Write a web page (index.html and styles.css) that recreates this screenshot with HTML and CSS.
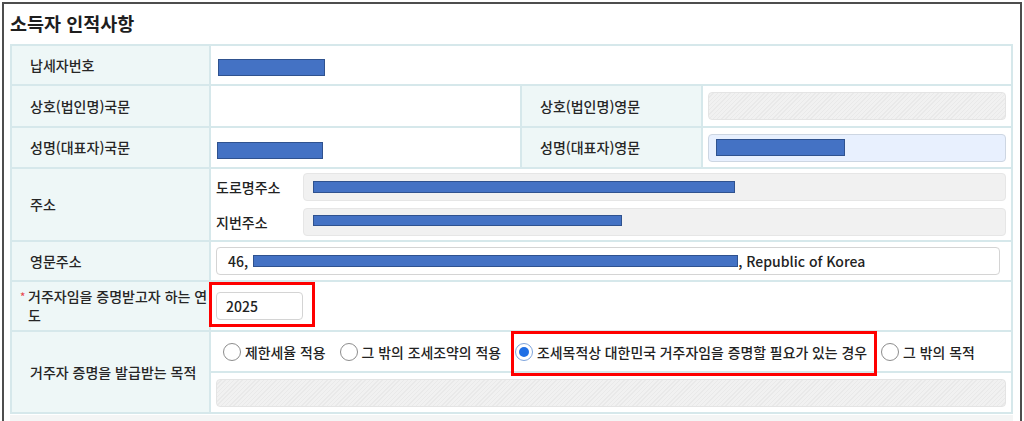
FILE: index.html
```html
<!DOCTYPE html>
<html lang="ko">
<head>
<meta charset="utf-8">
<title>소득자 인적사항</title>
<link rel="stylesheet" href="styles.css">
</head>
<body>
<div class="frame">
  <h2 class="title">소득자 인적사항</h2>
  <div class="tbl">
    <div class="lbl">납세자번호</div>
    <div class="val span3"><span class="redact r1"></span></div>

    <div class="lbl">상호(법인명)국문</div>
    <div class="val"></div>
    <div class="lbl">상호(법인명)영문</div>
    <div class="val"><div class="inp hatch"></div></div>

    <div class="lbl">성명(대표자)국문</div>
    <div class="val"><span class="redact r3a"></span></div>
    <div class="lbl">성명(대표자)영문</div>
    <div class="val"><div class="inp bluefield"><span class="redact r3b"></span></div></div>

    <div class="lbl">주소</div>
    <div class="val span3 addr">
      <div class="addr-row"><span class="sublbl">도로명주소</span><div class="inp gray"><span class="redact a1"></span></div></div>
      <div class="addr-row"><span class="sublbl">지번주소</span><div class="inp gray"><span class="redact a2"></span></div></div>
    </div>

    <div class="lbl">영문주소</div>
    <div class="val span3"><div class="inp white eng"><span>46,</span><span class="redact a3"></span><span>, Republic of Korea</span></div></div>

    <div class="lbl req-lbl"><span class="req">*</span>거주자임을 증명받고자 하는 연도</div>
    <div class="val span3 yearcell">
      <div class="inp white year">2025</div>
      <div class="mark mark-year"></div>
    </div>

    <div class="lbl">거주자 증명을 발급받는 목적</div>
    <div class="val span3 purpose">
      <div class="radios">
        <label class="opt"><span class="radio"></span>제한세율 적용</label>
        <label class="opt"><span class="radio"></span>그 밖의 조세조약의 적용</label>
        <label class="opt"><span class="radio on"></span>조세목적상 대한민국 거주자임을 증명할 필요가 있는 경우</label>
        <label class="opt"><span class="radio"></span>그 밖의 목적</label>
        <div class="mark mark-radio"></div>
      </div>
      <div class="inrow"><div class="inp hatch"></div></div>
    </div>
  </div>
  <div class="below"></div>
</div>
</body>
</html>
```

FILE: styles.css
```css
html, body {
  margin: 0;
  padding: 0;
  height: 421px;
  overflow: hidden;
  background: #fff;
}
body {
  font-family: "Noto Sans CJK KR", "Noto Sans", sans-serif;
  color: #222;
}
.frame {
  margin: 2px 0 0 2px;
  width: 1020px;
  height: 419px;
  box-sizing: border-box;
  border: 2px solid #4d4d4d;
  border-bottom: 0;
  padding-left: 6px;
  overflow: hidden;
}
.title {
  margin: 0 0 7px 0;
  padding-top: 5px;
  font-size: 18.5px;
  font-weight: 700;
  line-height: 28px;
  color: #1e1e1e;
}
.tbl {
  display: grid;
  grid-template-columns: 199px 311px 181px 310px;
  grid-template-rows: 40px 42px 41px 73px 40px 50px 82px;
  width: 1003px;
  box-sizing: border-box;
  border-top: 2px solid #d6e8eb;
  border-left: 2px solid #d6e8eb;
}
.tbl > div {
  box-sizing: border-box;
  border-right: 2px solid #d6e8eb;
  border-bottom: 2px solid #d6e8eb;
}
.lbl {
  background: #eef7f7;
  display: flex;
  align-items: center;
  padding: 0 2px 0 18px;
  font-size: 14px;
  font-weight: 500;
  line-height: 19px;
  color: #262626;
}
.req-lbl {
  display: block;
  padding: 5px 0 0 16px;
  word-break: break-all;
}
.req {
  display: inline-block;
  width: 8px;
  margin-left: -8px;
  color: #e8484f;
  font-size: 11px;
  vertical-align: top;
}
.val {
  display: flex;
  align-items: center;
  padding: 0 5px;
  font-size: 14px;
}
.span3 {
  grid-column: span 3;
}
.inp {
  height: 28px;
  flex: 1;
  box-sizing: border-box;
  border: 1px solid #e0e0e0;
  border-radius: 4px;
  display: flex;
  align-items: center;
}
.hatch {
  background: repeating-linear-gradient(-45deg, #f1f1f1 0 2px, #e9e9e9 2px 3px);
  border-color: #e4e4e4;
}
.gray {
  background: #f1f1f1;
  border-color: #e6e6e6;
}
.bluefield {
  background: #e8f0fe;
  border-color: #cdd6e2;
}
.white {
  background: #fff;
  border-color: #d4d4d4;
}
.redact {
  display: inline-block;
  box-sizing: border-box;
  background: #4472c4;
  border: 1px solid #2f528f;
}
.r1 { margin: 5px 0 0 2px; width: 107px; height: 17px; }
.r3a { margin: 6px 0 0 1px; width: 106px; height: 17px; }
.r3b { margin-left: 7px; width: 129px; height: 17px; }
.a1 { margin-left: 9px; width: 422px; height: 12px; }
.a2 { margin: 0 0 4px 9px; width: 309px; height: 11px; }
.a3 { margin-left: 5px; width: 485px; height: 12px; }

.addr {
  flex-direction: column;
  align-items: stretch;
  justify-content: center;
  gap: 7px;
}
.addr-row {
  display: flex;
  align-items: center;
}
.sublbl {
  width: 87px;
  font-size: 14px;
  font-weight: 500;
}
.eng {
  flex: none;
  width: 784px;
  padding-left: 11px;
  font-size: 14px;
  font-weight: 500;
}
.yearcell {
  position: relative;
}
.year {
  flex: none;
  width: 87px;
  padding-left: 9px;
  font-size: 14px;
  font-weight: 500;
}
.mark {
  position: absolute;
  box-sizing: border-box;
  border: 3px solid #ff0000;
}
.mark-year {
  left: -2px;
  top: 0;
  width: 106px;
  height: 45px;
}
.purpose {
  flex-direction: column;
  align-items: stretch;
  padding: 0;
}
.radios {
  position: relative;
  height: 41px;
  flex: none;
  box-sizing: border-box;
  border-bottom: 2px solid #d6e8eb;
  display: flex;
  align-items: center;
  padding-left: 12px;
  gap: 14px;
}
.opt {
  display: flex;
  align-items: center;
  gap: 4px;
  font-size: 13.9px;
  font-weight: 500;
  color: #222;
  white-space: nowrap;
}
.radio {
  width: 18px;
  height: 18px;
  box-sizing: border-box;
  border: 1px solid #8d8d8d;
  border-radius: 50%;
  background: #fff;
  display: flex;
  align-items: center;
  justify-content: center;
}
.radio.on {
  border-color: #7ea4dc;
}
.radio.on::after {
  content: "";
  width: 10px;
  height: 10px;
  border-radius: 50%;
  background: #1f6fe5;
}
.mark-radio {
  left: 300px;
  top: -1px;
  width: 366px;
  height: 45px;
}
.inrow {
  flex: 1;
  display: flex;
  align-items: center;
  padding: 0 5px;
}
.below {
  width: 1003px;
  height: 8px;
  margin-top: 1px;
  background: #f4f5f5;
}
```
